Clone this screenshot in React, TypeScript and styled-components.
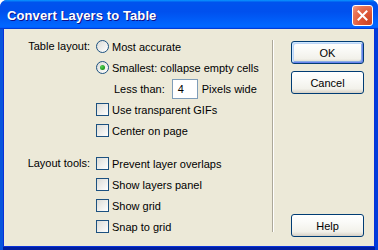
import React from "react";
import styled, { createGlobalStyle } from "styled-components";

const Global = createGlobalStyle`
  html, body { margin: 0; padding: 0; background: #ffffff; }
  body { font-family: "Liberation Sans", Arial, sans-serif; }
`;

const Window = styled.div`
  width: 378px;
  height: 250px;
  display: flex;
  flex-direction: column;
  background: #0831d9;
  border-radius: 7px 7px 0 0;
  overflow: hidden;
  box-sizing: border-box;
`;

const TitleBar = styled.div`
  height: 29px;
  flex: none;
  display: flex;
  align-items: center;
  justify-content: space-between;
  padding: 0 5px 0 7px;
  background: linear-gradient(180deg, #0997ff 0%, #0053ee 8%, #0050ee 40%, #0066ff 88%, #0066ff 93%, #005bff 95%, #003dd7 96%, #003dd7 100%);
`;

const Title = styled.span`
  color: #ffffff;
  font-family: "Liberation Sans", Arial, sans-serif;
  font-weight: bold;
  font-size: 13px;
  letter-spacing: 0.1px;
  text-shadow: 1px 1px 0 #0f1089;
  margin-top: 1px;
`;

const CloseButton = styled.div`
  width: 21px;
  height: 21px;
  box-sizing: border-box;
  border: 1px solid #ffffff;
  border-radius: 3px;
  background: radial-gradient(circle at 85% 85%, #cc4626 0%, #dd5535 40%, #e8775a 75%, #f1a089 100%);
  display: flex;
  align-items: center;
  justify-content: center;
  margin-top: 1px;
`;

const Frame = styled.div`
  flex: 1;
  display: flex;
  padding: 0 4px 4px 4px;
  box-shadow: inset 3px 0 0 #0855dd, inset -3px 0 0 #003bda, inset 0 -3px 0 #001ea0;
  min-height: 0;
`;

const Client = styled.div`
  flex: 1;
  display: flex;
  background: #ece9d8;
  font-size: 11px;
  color: #000000;
`;

const LeftPanel = styled.div`
  width: 264px;
  padding-top: 7px;
  display: flex;
  flex-direction: column;
`;

const Section = styled.div<{ $gap?: number }>`
  display: flex;
  margin-top: ${(p) => p.$gap ?? 0}px;
`;

const Label = styled.div`
  width: 86px;
  flex: none;
  text-align: right;
  line-height: 21px;
  height: 21px;
  margin-right: 6px;
  white-space: nowrap;
`;

const Options = styled.div`
  display: flex;
  flex-direction: column;
`;

const Row = styled.label<{ $indent?: number }>`
  display: flex;
  align-items: center;
  height: 21px;
  gap: 3px;
  padding-left: ${(p) => p.$indent ?? 0}px;
  white-space: nowrap;
`;

const Radio = styled.span<{ $checked?: boolean }>`
  width: 13px;
  height: 13px;
  box-sizing: border-box;
  border-radius: 50%;
  border: 1px solid #1c5180;
  background: linear-gradient(135deg, #dcdcd7 0%, #ffffff 100%);
  display: flex;
  align-items: center;
  justify-content: center;
  flex: none;
  &::after {
    content: "";
    display: ${(p) => (p.$checked ? "block" : "none")};
    width: 5px;
    height: 5px;
    border-radius: 50%;
    background: radial-gradient(circle at 35% 35%, #5ad15a 0%, #21a121 60%, #1a7e1a 100%);
  }
`;

const Check = styled.span`
  width: 13px;
  height: 13px;
  box-sizing: border-box;
  border: 1px solid #1c5180;
  background: linear-gradient(135deg, #dcdcd7 0%, #ffffff 100%);
  flex: none;
`;

const NumberBox = styled.div`
  width: 26px;
  height: 20px;
  box-sizing: border-box;
  border: 1px solid #7f9db9;
  background: #ffffff;
  line-height: 18px;
  padding-left: 5px;
  margin-left: 4px;
  margin-right: 1px;
`;

const Separator = styled.div`
  width: 1px;
  margin: 11px 0 14px 4px;
  background: #aca899;
  box-shadow: 1px 0 0 #ffffff;
  flex: none;
`;

const RightPanel = styled.div`
  flex: 1;
  display: flex;
  flex-direction: column;
  padding: 12px 0 9px 18px;
  gap: 7px;
`;

const Button = styled.div<{ $default?: boolean; $push?: boolean }>`
  width: 73px;
  height: 23px;
  box-sizing: border-box;
  border: 1px solid #003c74;
  border-radius: 3px;
  background: linear-gradient(180deg, #ffffff 0%, #fbfbf9 30%, #f2f1ea 80%, #d6d0c5 100%);
  box-shadow: ${(p) =>
    p.$default
      ? "inset 1px 1px 0 #cee7ff, inset -1px -1px 0 #6982ee, inset 2px 2px 0 #bcd4f6, inset -2px -2px 0 #89ade4"
      : "none"};
  display: flex;
  align-items: center;
  justify-content: center;
  font-size: 11px;
  margin-top: ${(p) => (p.$push ? "auto" : "0")};
`;

export default function App() {
  return (
    <>
      <Global />
      <Window>
        <TitleBar>
          <Title>Convert Layers to Table</Title>
          <CloseButton>
            <svg width="11" height="11" viewBox="0 0 11 11">
              <path d="M1.5 1.5 L9.5 9.5 M9.5 1.5 L1.5 9.5" stroke="#ffffff" strokeWidth="2" strokeLinecap="square" />
            </svg>
          </CloseButton>
        </TitleBar>
        <Frame>
          <Client>
            <LeftPanel>
              <Section>
                <Label>Table layout:</Label>
                <Options>
                  <Row>
                    <Radio />
                    Most accurate
                  </Row>
                  <Row>
                    <Radio $checked />
                    Smallest: collapse empty cells
                  </Row>
                  <Row $indent={18}>
                    Less than:
                    <NumberBox>4</NumberBox>
                    Pixels wide
                  </Row>
                  <Row>
                    <Check />
                    Use transparent GIFs
                  </Row>
                  <Row>
                    <Check />
                    Center on page
                  </Row>
                </Options>
              </Section>
              <Section $gap={12}>
                <Label>Layout tools:</Label>
                <Options>
                  <Row>
                    <Check />
                    Prevent layer overlaps
                  </Row>
                  <Row>
                    <Check />
                    Show layers panel
                  </Row>
                  <Row>
                    <Check />
                    Show grid
                  </Row>
                  <Row>
                    <Check />
                    Snap to grid
                  </Row>
                </Options>
              </Section>
            </LeftPanel>
            <Separator />
            <RightPanel>
              <Button $default>OK</Button>
              <Button>Cancel</Button>
              <Button $push>Help</Button>
            </RightPanel>
          </Client>
        </Frame>
      </Window>
    </>
  );
}
